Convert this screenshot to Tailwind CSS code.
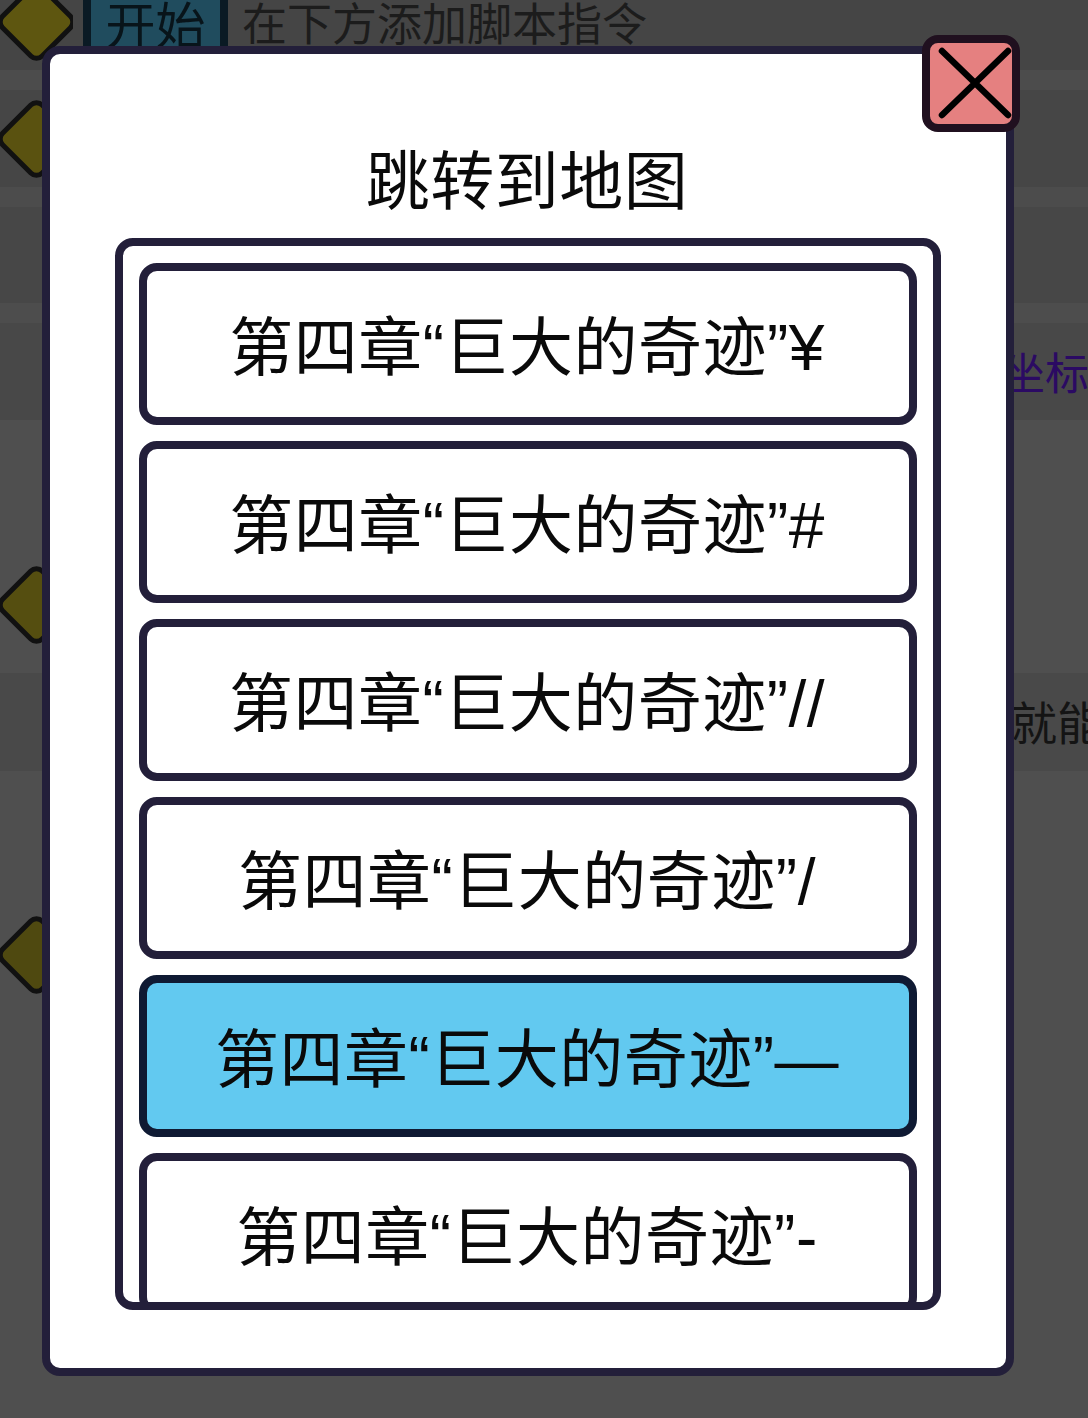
<!DOCTYPE html>
<html lang="zh">
<head>
  <meta charset="UTF-8">
  <title>跳转到地图</title>
  <script src="https://cdn.jsdelivr.net/npm/@tailwindcss/browser@4"></script>
</head>
<body class="bg-[#4f4f4f] font-['Liberation_Sans','Noto_Sans_CJK_SC',sans-serif] text-black overflow-hidden">
  <div class="relative w-[1088px] h-[1418px] overflow-hidden">
    <!-- dimmed page behind the dialog -->
    <div class="h-[70px] bg-[#454545] pl-[83px] flex items-start">
      <div class="h-[60px] w-[145px] -mt-[4px] pt-[3px] border-x-[8px] border-[#0a1a24] bg-[#204c5e] text-[50px] leading-[56px] text-center text-[#08141a] shrink-0">开始</div>
      <div class="ml-[14px] text-[45px] leading-[56px] -mt-[2px] text-[#1c1c1c] whitespace-nowrap">在下方添加脚本指令</div>
    </div>
    <div class="h-[20px] bg-[#4c4c4c]"></div>
    <div class="h-[97px] bg-[#464646]"></div>
    <div class="h-[20px] bg-[#4c4c4c]"></div>
    <div class="h-[96px] bg-[#474747]"></div>
    <div class="h-[20px] bg-[#4d4d4d]"></div>
    <div class="h-[97px] pt-[7px] bg-[#484848] flex justify-end items-center">
      <span class="text-[44px] text-[#2b0a63] whitespace-nowrap -mr-[1px]">坐标</span>
    </div>
    <div class="h-[253px] bg-[#4f4f4f]"></div>
    <div class="h-[98px] pt-[4px] bg-[#494949] flex justify-end items-center">
      <span class="text-[46px] text-[#141414] whitespace-nowrap -mr-[15px]">就能</span>
    </div>
    <svg class="absolute left-0 top-[-17px]" width="73" height="78" viewBox="0 0 73 78"><rect x="8.5" y="11" width="56" height="56" rx="8" transform="rotate(45 36.5 39)" fill="#5e5610" stroke="#111" stroke-width="5"/></svg>
    <svg class="absolute left-0 top-[100px]" width="73" height="78" viewBox="0 0 73 78"><rect x="8.5" y="11" width="56" height="56" rx="8" transform="rotate(45 36.5 39)" fill="#5a5210" stroke="#111" stroke-width="5"/></svg>
    <svg class="absolute left-0 top-[566px]" width="73" height="78" viewBox="0 0 73 78"><rect x="8.5" y="11" width="56" height="56" rx="8" transform="rotate(45 36.5 39)" fill="#554e10" stroke="#111" stroke-width="5"/></svg>
    <svg class="absolute left-0 top-[916px]" width="73" height="78" viewBox="0 0 73 78"><rect x="8.5" y="11" width="56" height="56" rx="8" transform="rotate(45 36.5 39)" fill="#4f4910" stroke="#111" stroke-width="5"/></svg>

    <!-- dialog -->
    <div class="absolute left-[42px] top-[46px] w-[972px] h-[1330px] bg-white border-[8px] border-[#231f3a] rounded-[18px] flex flex-col items-center px-[65px]">
      <div class="h-[184px] shrink-0 text-[64px] leading-[64px] pt-[96px] pr-[2px] tracking-[0.5px] text-[#0a0a0a]">跳转到地图</div>
      <div class="w-[826px] h-[1072px] shrink-0 border-[8px] border-[#231f3a] rounded-[18px] overflow-hidden px-[16px] pt-[17px] flex flex-col gap-[16px]">
        <div class="h-[162px] shrink-0 pt-[8px] pr-[2px] bg-white border-[8px] border-[#231f3a] rounded-[18px] flex items-center justify-center text-[64px] tracking-[0.5px] text-[#0a0a0a] whitespace-nowrap">第四章“巨大的奇迹”¥</div>
        <div class="h-[162px] shrink-0 pt-[8px] pr-[2px] bg-white border-[8px] border-[#231f3a] rounded-[18px] flex items-center justify-center text-[64px] tracking-[0.5px] text-[#0a0a0a] whitespace-nowrap">第四章“巨大的奇迹”#</div>
        <div class="h-[162px] shrink-0 pt-[8px] pr-[2px] bg-white border-[8px] border-[#231f3a] rounded-[18px] flex items-center justify-center text-[64px] tracking-[0.5px] text-[#0a0a0a] whitespace-nowrap">第四章“巨大的奇迹”//</div>
        <div class="h-[162px] shrink-0 pt-[8px] pr-[2px] bg-white border-[8px] border-[#231f3a] rounded-[18px] flex items-center justify-center text-[64px] tracking-[0.5px] text-[#0a0a0a] whitespace-nowrap">第四章“巨大的奇迹”/</div>
        <div class="h-[162px] shrink-0 pt-[8px] pr-[2px] bg-[#62c9f0] border-[8px] border-[#0f1a33] rounded-[18px] flex items-center justify-center text-[64px] tracking-[0.5px] text-[#0a0a0a] whitespace-nowrap">第四章“巨大的奇迹”—</div>
        <div class="h-[162px] shrink-0 pt-[8px] pr-[2px] bg-white border-[8px] border-[#231f3a] rounded-[18px] flex items-center justify-center text-[64px] tracking-[0.5px] text-[#0a0a0a] whitespace-nowrap">第四章“巨大的奇迹”-</div>
      </div>
    </div>

    <!-- close button -->
    <div class="absolute left-[922px] top-[35px] w-[98px] h-[97px] bg-[#e58080] border-[8px] border-[#20101f] rounded-[16px] flex items-center justify-center">
      <svg width="82" height="81" viewBox="0 0 82 81"><path d="M12 8 L78 72 M78 8 L12 72" stroke="#000" stroke-width="6.5" stroke-linecap="round" fill="none"/></svg>
    </div>
  </div>
</body>
</html>
